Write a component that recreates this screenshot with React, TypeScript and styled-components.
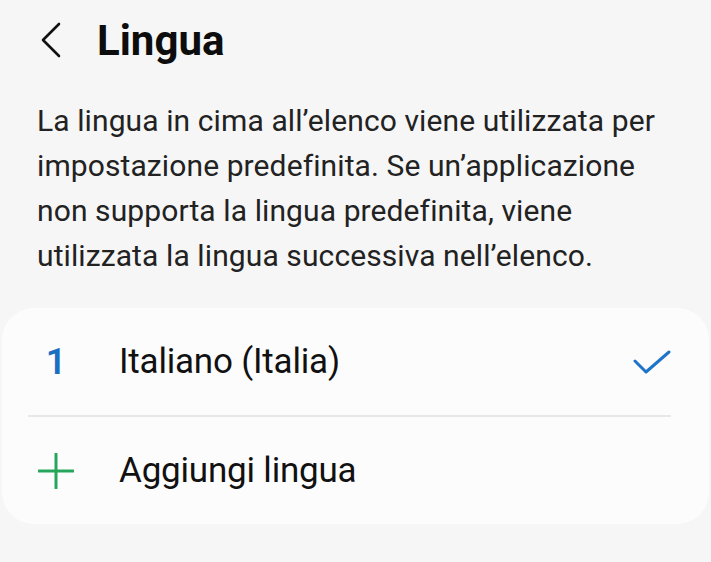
import React from 'react';
import styled, { createGlobalStyle } from 'styled-components';

const GlobalStyle = createGlobalStyle`
  html, body {
    margin: 0;
    padding: 0;
    background: #f6f6f6;
  }
  body {
    font-family: Roboto, 'Noto Sans', sans-serif;
    color: #1c1c1c;
  }
`;

const Page = styled.div`
  width: 711px;
  height: 562px;
  overflow: hidden;
  background: #f6f6f6;
`;

const Header = styled.header`
  display: flex;
  align-items: center;
  height: 80px;
  padding: 0 0 0 36px;
  gap: 31px;
`;

const BackButton = styled.button`
  display: flex;
  align-items: center;
  justify-content: center;
  width: 30px;
  height: 40px;
  padding: 0;
  border: none;
  background: none;
  color: #111;
`;

const Title = styled.h1`
  margin: 0;
  font-size: 42px;
  font-weight: 700;
  color: #0d0d0d;
`;

const Description = styled.p`
  margin: 18px 0 0;
  padding: 0 30px 0 37px;
  font-size: 30px;
  line-height: 45px;
  letter-spacing: 0.1px;
  color: #222;
`;

const Card = styled.section`
  margin: 30px 2px 0;
  background: #fdfcfd;
  border-radius: 32px;
  padding: 0 38px 0 26px;
`;

const Row = styled.div`
  display: flex;
  align-items: center;
  height: 107px;
`;

const Divider = styled.div`
  height: 2px;
  background: #e8e8e8;
`;

const Lead = styled.div`
  width: 56px;
  margin-right: 35px;
  display: flex;
  align-items: center;
  justify-content: center;
`;

const Index = styled.span`
  font-size: 36px;
  font-weight: 600;
  color: #1b6fc0;
`;

const Label = styled.span`
  flex: 1;
  font-size: 35px;
  color: #111;
  letter-spacing: -0.2px;
`;

const Check = () => (
  <svg width="38" height="26" viewBox="0 0 38 26" fill="none">
    <path d="M2 12 L13 23 L36 3" stroke="#1f74c9" strokeWidth="3" strokeLinecap="round" strokeLinejoin="round" />
  </svg>
);

const Plus = () => (
  <svg width="36" height="36" viewBox="0 0 36 36" fill="none">
    <path d="M18 1 V35 M1 18 H35" stroke="#27a55a" strokeWidth="3" strokeLinecap="round" />
  </svg>
);

const Chevron = () => (
  <svg width="22" height="36" viewBox="0 0 22 36" fill="none">
    <path d="M19 2 L3 18 L19 34" stroke="#111" strokeWidth="2.6" strokeLinecap="round" strokeLinejoin="round" />
  </svg>
);

export default function App() {
  return (
    <>
      <GlobalStyle />
      <Page>
        <Header>
          <BackButton aria-label="Indietro">
            <Chevron />
          </BackButton>
          <Title>Lingua</Title>
        </Header>
        <Description>
          La lingua in cima all’elenco viene utilizzata per
          <br />
          impostazione predefinita. Se un’applicazione
          <br />
          non supporta la lingua predefinita, viene
          <br />
          utilizzata la lingua successiva nell’elenco.
        </Description>
        <Card>
          <Row>
            <Lead>
              <Index>1</Index>
            </Lead>
            <Label>Italiano (Italia)</Label>
            <Check />
          </Row>
          <Divider />
          <Row>
            <Lead>
              <Plus />
            </Lead>
            <Label>Aggiungi lingua</Label>
          </Row>
        </Card>
      </Page>
    </>
  );
}
